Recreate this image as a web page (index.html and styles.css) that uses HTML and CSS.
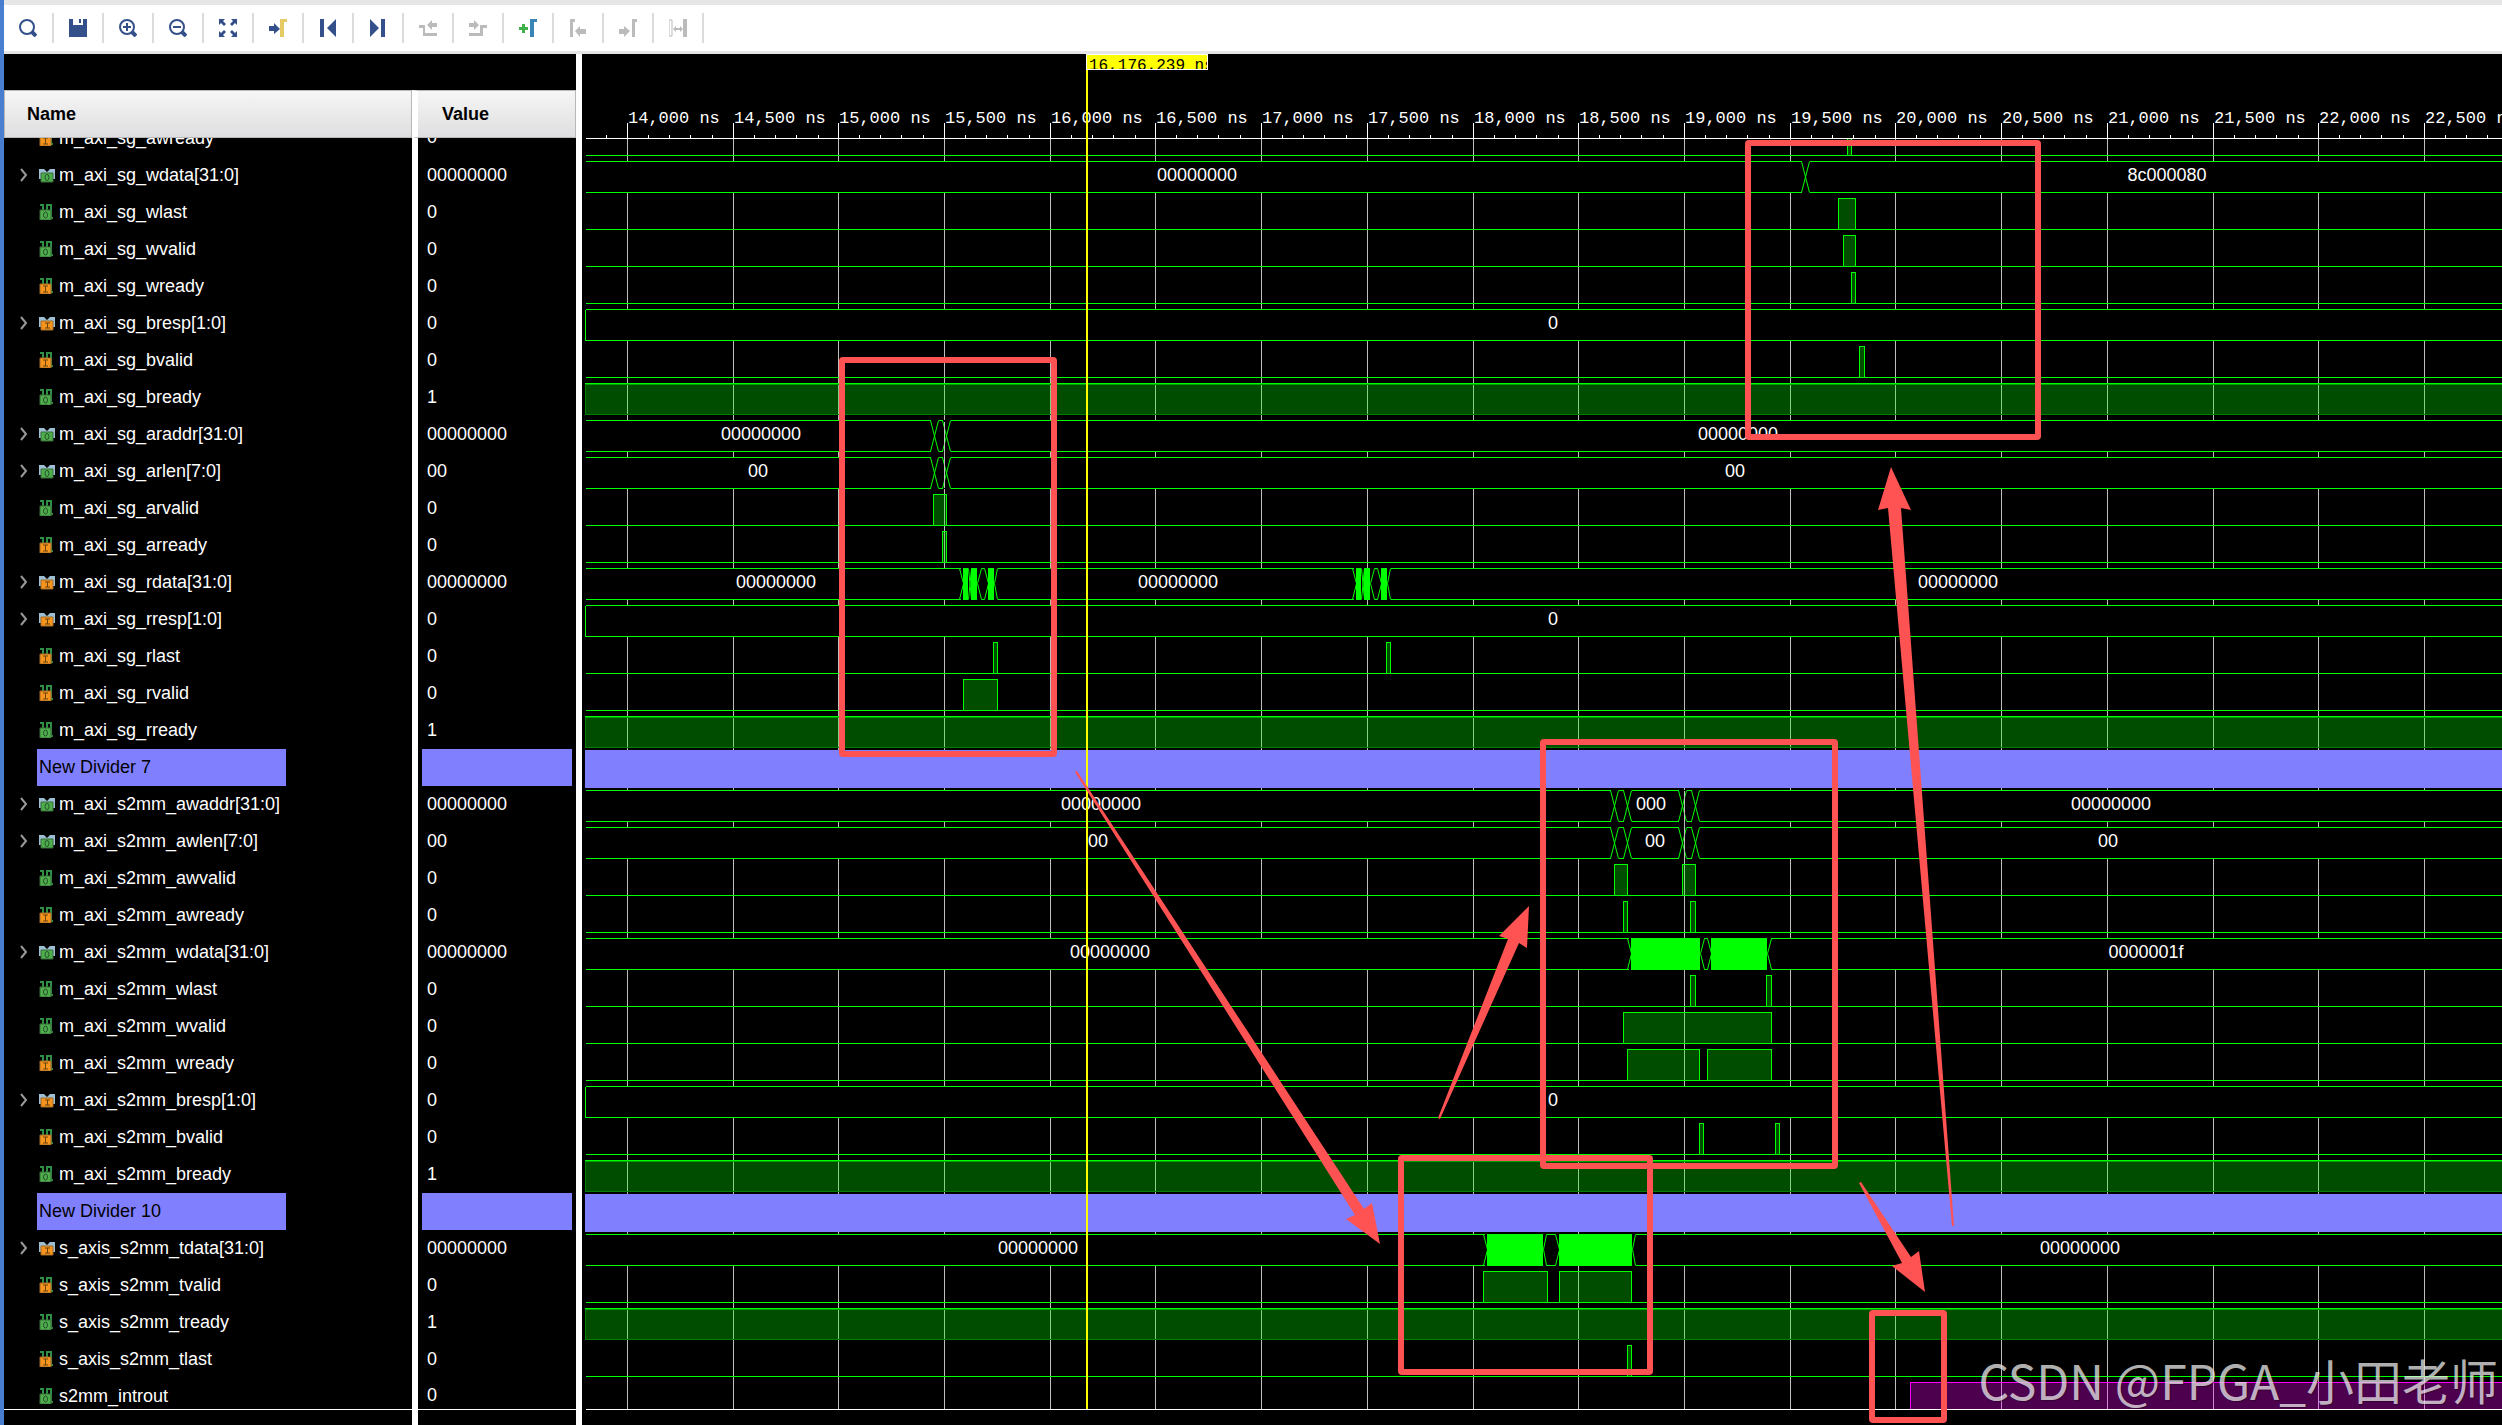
FILE: index.html
```html
<!DOCTYPE html>
<html lang="en">
<head>
<meta charset="utf-8">
<title>Waveform</title>
<link rel="stylesheet" href="styles.css">
</head>
<body>
<svg class="defs" aria-hidden="true">
  <symbol id="net-out" viewBox="0 0 16 16"><path d="M1 1h3v6M8 7V1h4v13h2" fill="none" stroke="#2f8f45" stroke-width="2"/><path d="M1 6h11v10H1z" fill="#4fae4c" stroke="#3a6b3a"/><ellipse cx="6.500" cy="11" rx="2" ry="3" fill="none" stroke="#24502a"/></symbol>
  <symbol id="net-in" viewBox="0 0 16 16"><path d="M1 1h3v6M8 7V1h4v13h2" fill="none" stroke="#2f8f45" stroke-width="2"/><path d="M1 6h11v10H1z" fill="#f7941d" stroke="#a06a2a"/><path d="M4 8h5M4 14h5M6.500 8v6" stroke="#6b430f"/></symbol>
  <symbol id="bus-out" viewBox="0 0 16 16"><path d="M0 2h5l3 3 3-3h5v10h-3V8H3v4H0z" fill="#9dbfd3"/><path d="M2 6h12v9H2z" fill="#4fae4c" stroke="#3a6b3a"/><ellipse cx="8" cy="10.500" rx="2" ry="3" fill="none" stroke="#24502a"/></symbol>
  <symbol id="bus-in" viewBox="0 0 16 16"><path d="M0 2h5l3 3 3-3h5v10h-3V8H3v4H0z" fill="#9dbfd3"/><path d="M2 6h12v9H2z" fill="#f7941d" stroke="#a06a2a"/><path d="M6 8h5M6 13h5M8.500 8v5" stroke="#6b430f"/></symbol>
  <symbol id="chev" viewBox="0 0 16 16"><path d="M5 2l5 6-5 6" fill="none" stroke="#999" stroke-width="2"/></symbol>
</svg>

<header class="toolbar">
  <button aria-label="Find"><svg viewBox="0 0 18 18"><circle cx="8" cy="8" r="7" class="ln"/><path d="M13 13l4 4" class="ln thick"/></svg></button>
  <button aria-label="Save"><svg viewBox="0 0 18 18"><path d="M0 0h4v6h10V0h4v18H0z M10 0h2v4h-2z"/></svg></button>
  <button aria-label="Zoom in"><svg viewBox="0 0 18 18"><circle cx="8" cy="8" r="7" class="ln"/><path d="M13 13l4 4" class="ln thick"/><path d="M4 8h8M8 4v8" class="ln"/></svg></button>
  <button aria-label="Zoom out"><svg viewBox="0 0 18 18"><circle cx="8" cy="8" r="7" class="ln"/><path d="M13 13l4 4" class="ln thick"/><path d="M4 8h8" class="ln"/></svg></button>
  <button aria-label="Zoom fit"><svg viewBox="0 0 18 18"><path d="M0 0h6L4 2l3 3-2 2-3-3-2 2zM18 0v6l-2-2-3 3-2-2 3-3-2-2zM0 18v-6l2 2 3-3 2 2-3 3 2 2zM18 18h-6l2-2-3-3 2-2 3 3 2-2z"/></svg></button>
  <button aria-label="Go to cursor"><svg viewBox="0 0 18 18"><path d="M0 7h5V4l6 6-6 5v-3H0z"/><path d="M11 0h7v3h-3v15h-4z" fill="#e3ca62"/></svg></button>
  <button aria-label="Go to start"><svg viewBox="0 0 18 18"><path d="M1 0h4v18H1zM17 0v18L8 9z"/></svg></button>
  <button aria-label="Go to end"><svg viewBox="0 0 18 18"><path d="M12 0h4v18h-4zM1 0v18l9-9z"/></svg></button>
  <button aria-label="Previous transition" disabled><svg viewBox="0 0 18 18"><path d="M0 6h6v8h12v3H4V9H0zM8 6l5-5v3h5v4h-5v3z"/></svg></button>
  <button aria-label="Next transition" disabled><svg viewBox="0 0 18 18"><path d="M0 14h11V6h7v3h-4v8H0zM0 4h5V1l5 5-5 5V8H0z"/></svg></button>
  <button aria-label="Add marker"><svg viewBox="0 0 18 18"><path d="M3 5h3v3h3v3H6v3H3v-3H0V8h3z" fill="#3fb04a"/><path d="M11 0h7v3h-3v15h-4z" fill="#3a85b5"/></svg></button>
  <button aria-label="Previous marker" disabled><svg viewBox="0 0 18 18"><path d="M1 0h5v3H4v15H1zM6 12l5-5v3h6v5h-6v3z"/></svg></button>
  <button aria-label="Next marker" disabled><svg viewBox="0 0 18 18"><path d="M13 0h5v3h-2v15h-3zM0 10h5V7l6 5-6 6v-3H0z"/></svg></button>
  <button aria-label="Swap cursors" disabled><svg viewBox="0 0 18 18"><path d="M0 1h3v16H0z" fill="none" stroke="#bbb"/><path d="M14 0h4v18h-4zM4 10l3-3v2h4V7l3 3-3 3v-2H7v2z"/></svg></button>
</header>

<main class="viewer">
  <section class="signals">
    <table>
      <thead><tr><th scope="col" class="c-name">Name</th><th scope="col">Value</th></tr></thead>
      <tbody>
        <tr class="cut-top"><td><div class="sig"><i></i><svg><use href="#net-in"/></svg>m_axi_sg_awready</div></td><td><div class="val">0</div></td></tr>
        <tr><td><div class="sig"><button aria-label="Expand"><svg><use href="#chev"/></svg></button><svg><use href="#bus-out"/></svg>m_axi_sg_wdata[31:0]</div></td><td>00000000</td></tr>
        <tr><td><div class="sig"><i></i><svg><use href="#net-out"/></svg>m_axi_sg_wlast</div></td><td>0</td></tr>
        <tr><td><div class="sig"><i></i><svg><use href="#net-out"/></svg>m_axi_sg_wvalid</div></td><td>0</td></tr>
        <tr><td><div class="sig"><i></i><svg><use href="#net-in"/></svg>m_axi_sg_wready</div></td><td>0</td></tr>
        <tr><td><div class="sig"><button aria-label="Expand"><svg><use href="#chev"/></svg></button><svg><use href="#bus-in"/></svg>m_axi_sg_bresp[1:0]</div></td><td>0</td></tr>
        <tr><td><div class="sig"><i></i><svg><use href="#net-in"/></svg>m_axi_sg_bvalid</div></td><td>0</td></tr>
        <tr><td><div class="sig"><i></i><svg><use href="#net-out"/></svg>m_axi_sg_bready</div></td><td>1</td></tr>
        <tr><td><div class="sig"><button aria-label="Expand"><svg><use href="#chev"/></svg></button><svg><use href="#bus-out"/></svg>m_axi_sg_araddr[31:0]</div></td><td>00000000</td></tr>
        <tr><td><div class="sig"><button aria-label="Expand"><svg><use href="#chev"/></svg></button><svg><use href="#bus-out"/></svg>m_axi_sg_arlen[7:0]</div></td><td>00</td></tr>
        <tr><td><div class="sig"><i></i><svg><use href="#net-out"/></svg>m_axi_sg_arvalid</div></td><td>0</td></tr>
        <tr><td><div class="sig"><i></i><svg><use href="#net-in"/></svg>m_axi_sg_arready</div></td><td>0</td></tr>
        <tr><td><div class="sig"><button aria-label="Expand"><svg><use href="#chev"/></svg></button><svg><use href="#bus-in"/></svg>m_axi_sg_rdata[31:0]</div></td><td>00000000</td></tr>
        <tr><td><div class="sig"><button aria-label="Expand"><svg><use href="#chev"/></svg></button><svg><use href="#bus-in"/></svg>m_axi_sg_rresp[1:0]</div></td><td>0</td></tr>
        <tr><td><div class="sig"><i></i><svg><use href="#net-in"/></svg>m_axi_sg_rlast</div></td><td>0</td></tr>
        <tr><td><div class="sig"><i></i><svg><use href="#net-in"/></svg>m_axi_sg_rvalid</div></td><td>0</td></tr>
        <tr><td><div class="sig"><i></i><svg><use href="#net-out"/></svg>m_axi_sg_rready</div></td><td>1</td></tr>
        <tr class="divider"><td><div>New Divider 7</div></td><td><div></div></td></tr>
        <tr><td><div class="sig"><button aria-label="Expand"><svg><use href="#chev"/></svg></button><svg><use href="#bus-out"/></svg>m_axi_s2mm_awaddr[31:0]</div></td><td>00000000</td></tr>
        <tr><td><div class="sig"><button aria-label="Expand"><svg><use href="#chev"/></svg></button><svg><use href="#bus-out"/></svg>m_axi_s2mm_awlen[7:0]</div></td><td>00</td></tr>
        <tr><td><div class="sig"><i></i><svg><use href="#net-out"/></svg>m_axi_s2mm_awvalid</div></td><td>0</td></tr>
        <tr><td><div class="sig"><i></i><svg><use href="#net-in"/></svg>m_axi_s2mm_awready</div></td><td>0</td></tr>
        <tr><td><div class="sig"><button aria-label="Expand"><svg><use href="#chev"/></svg></button><svg><use href="#bus-out"/></svg>m_axi_s2mm_wdata[31:0]</div></td><td>00000000</td></tr>
        <tr><td><div class="sig"><i></i><svg><use href="#net-out"/></svg>m_axi_s2mm_wlast</div></td><td>0</td></tr>
        <tr><td><div class="sig"><i></i><svg><use href="#net-out"/></svg>m_axi_s2mm_wvalid</div></td><td>0</td></tr>
        <tr><td><div class="sig"><i></i><svg><use href="#net-in"/></svg>m_axi_s2mm_wready</div></td><td>0</td></tr>
        <tr><td><div class="sig"><button aria-label="Expand"><svg><use href="#chev"/></svg></button><svg><use href="#bus-in"/></svg>m_axi_s2mm_bresp[1:0]</div></td><td>0</td></tr>
        <tr><td><div class="sig"><i></i><svg><use href="#net-in"/></svg>m_axi_s2mm_bvalid</div></td><td>0</td></tr>
        <tr><td><div class="sig"><i></i><svg><use href="#net-out"/></svg>m_axi_s2mm_bready</div></td><td>1</td></tr>
        <tr class="divider"><td><div>New Divider 10</div></td><td><div></div></td></tr>
        <tr><td><div class="sig"><button aria-label="Expand"><svg><use href="#chev"/></svg></button><svg><use href="#bus-in"/></svg>s_axis_s2mm_tdata[31:0]</div></td><td>00000000</td></tr>
        <tr><td><div class="sig"><i></i><svg><use href="#net-in"/></svg>s_axis_s2mm_tvalid</div></td><td>0</td></tr>
        <tr><td><div class="sig"><i></i><svg><use href="#net-out"/></svg>s_axis_s2mm_tready</div></td><td>1</td></tr>
        <tr><td><div class="sig"><i></i><svg><use href="#net-in"/></svg>s_axis_s2mm_tlast</div></td><td>0</td></tr>
        <tr class="cut-bottom"><td><div class="sig"><i></i><svg><use href="#net-out"/></svg>s2mm_introut</div></td><td><div class="val">0</div></td></tr>
      </tbody>
    </table>
  </section>

  <section class="waves">
    <div class="cursor"><span>16,176.239 ns</span></div>
    <svg class="ruler">
      <defs><g id="major"><path d="M0 68v16M21 80v4M42 80v4M63 80v4M85 80v4"/></g></defs>
      <g class="crisp" transform="translate(.5 .5)" stroke="#fff">
        <path d="M3 84H4000M24 80v4"/>
        <use href="#major" x="45"/><use href="#major" x="151"/><use href="#major" x="256"/><use href="#major" x="362"/><use href="#major" x="468"/><use href="#major" x="573"/><use href="#major" x="679"/><use href="#major" x="785"/><use href="#major" x="891"/><use href="#major" x="996"/><use href="#major" x="1102"/><use href="#major" x="1208"/><use href="#major" x="1313"/><use href="#major" x="1419"/><use href="#major" x="1525"/><use href="#major" x="1631"/><use href="#major" x="1736"/><use href="#major" x="1842"/>
      </g>
      <g class="ticks">
        <text x="46" y="69">14,000 ns</text><text x="152" y="69">14,500 ns</text><text x="257" y="69">15,000 ns</text><text x="363" y="69">15,500 ns</text><text x="469" y="69">16,000 ns</text><text x="574" y="69">16,500 ns</text><text x="680" y="69">17,000 ns</text><text x="786" y="69">17,500 ns</text><text x="892" y="69">18,000 ns</text><text x="997" y="69">18,500 ns</text><text x="1103" y="69">19,000 ns</text><text x="1209" y="69">19,500 ns</text><text x="1314" y="69">20,000 ns</text><text x="1420" y="69">20,500 ns</text><text x="1526" y="69">21,000 ns</text><text x="1632" y="69">21,500 ns</text><text x="1737" y="69">22,000 ns</text><text x="1843" y="69">22,500 ns</text>
      </g>
    </svg>
    <svg class="plot">
      <defs>
        <path id="low" d="M585 35H4000"/>
        <g id="bus"><path d="M585 4h4000v31h-4000z" fill="#000" stroke="none"/><path d="M585 4H4000M585 35H4000"/></g>
        <g id="high"><path d="M585 4h4000v31h-4000z" class="fill"/><path d="M585 5H4000" stroke="#00a000"/><path d="M585 35H4000M585 4V35" stroke="#008000"/><path d="M585 4H4000"/></g>
        <path id="band" d="M585 1h4000v37h-4000z" fill="#8080ff" stroke="#8080ff"/>
        <g id="cross"><path d="M0 4H8M0 35H8" stroke="#000"/><path d="M0 4L8 35M8 4L0 35" class="soft"/></g>
        <!-- single-cycle pulse -->
        <path id="p4" d="M0 35V4H4V35" class="fill"/>
      </defs>
      <g class="crisp" transform="translate(-581.5 18.5)" stroke="#00ff00" fill="none">
        <path class="grid" d="M627-19V1252M733-19V1252M838-19V1252M944-19V1252M1050-19V1252M1155-19V1252M1261-19V1252M1367-19V1252M1473-19V1252M1578-19V1252M1684-19V1252M1790-19V1252M1895-19V1252M2001-19V1252M2107-19V1252M2213-19V1252M2318-19V1252M2424-19V1252"/>

        <use href="#low" y="-37"/><path class="fill" d="M1847-2V-40H1851V-2"/>
        <use href="#bus"/><use href="#cross" x="1801"/>
        <use href="#low" y="37"/><path class="fill" d="M1838 72V41H1855V72"/>
        <use href="#low" y="74"/><path class="fill" d="M1843 109V78H1855V109"/>
        <use href="#low" y="111"/><use href="#p4" x="1851" y="111"/>
        <use href="#bus" y="148"/><path d="M585 152V183"/>
        <use href="#low" y="185"/><path class="fill" d="M1859 220V189H1864V220"/>
        <use href="#high" y="222"/>
        <use href="#bus" y="259"/><use href="#cross" x="930" y="259"/><use href="#cross" x="942" y="259"/>
        <use href="#bus" y="296"/><use href="#cross" x="930" y="296"/><use href="#cross" x="942" y="296"/>
        <use href="#low" y="333"/><path class="fill" d="M933 368V337H946V368"/>
        <use href="#low" y="370"/><use href="#p4" x="942" y="370"/>
        <use href="#bus" y="407"/>
        <g id="rburst" transform="translate(0 407)">
          <path d="M960 4H997M960 35H997" stroke="#000"/>
          <path class="soft" d="M959 4L963 19 959 35M977 19L981 4H984L988 19 984 35H981L977 19M997 4L994 19 997 35M968 4l3 31M968 35l3-31"/>
          <path class="solid" d="M963 4h4v31h-4zM971 4h5v31h-5zM988 4h5v31h-5z"/>
        </g>
        <use href="#rburst" x="393"/>
        <use href="#bus" y="444"/><path d="M585 448V479"/>
        <use href="#low" y="481"/><use href="#p4" x="993" y="481"/><use href="#p4" x="1386" y="481"/>
        <use href="#low" y="518"/><path class="fill" d="M963 553V522H997V553"/>
        <use href="#high" y="555"/>
        <use href="#band" y="592"/>
        <use href="#bus" y="629"/><use href="#cross" x="1610" y="629"/><use href="#cross" x="1623" y="629"/><use href="#cross" x="1678" y="629"/><use href="#cross" x="1691" y="629"/>
        <use href="#bus" y="666"/><use href="#cross" x="1610" y="666"/><use href="#cross" x="1623" y="666"/><use href="#cross" x="1678" y="666"/><use href="#cross" x="1691" y="666"/>
        <path class="grid" d="M944 264V330M1684 633V701"/>
        <use href="#low" y="703"/><path class="fill" d="M1614 738V707H1627V738M1682 738V707H1695V738"/>
        <use href="#low" y="740"/><use href="#p4" x="1623" y="740"/><path class="fill" d="M1690 775V744H1695V775"/>
        <use href="#bus" y="777"/>
        <g transform="translate(0 777)">
          <path d="M1628 4H1770M1628 35H1770" stroke="#000"/>
          <path class="soft" d="M1627 4L1631 19 1627 35M1700 19L1704 4H1707L1711 19 1707 35H1704L1700 19M1771 4L1767 19 1771 35"/>
          <path class="solid" d="M1631 4h68v31h-68zM1711 4h55v31h-55z"/>
        </g>
        <use href="#low" y="814"/><path class="fill" d="M1690 849V818H1695V849M1766 849V818H1771V849"/>
        <use href="#low" y="851"/><path class="fill" d="M1623 886V855H1771V886"/>
        <use href="#low" y="888"/><path class="fill" d="M1627 923V892H1699V923M1707 923V892H1771V923"/>
        <use href="#bus" y="925"/><path d="M585 929V960"/>
        <use href="#low" y="962"/><use href="#p4" x="1699" y="962"/><use href="#p4" x="1775" y="962"/>
        <use href="#high" y="999"/>
        <use href="#band" y="1036"/>
        <use href="#bus" y="1073"/>
        <g transform="translate(0 1073)">
          <path d="M1484 4H1635M1484 35H1635" stroke="#000"/>
          <path class="soft" d="M1483 4L1487 19 1483 35M1543 19L1546 4H1555L1559 19 1555 35H1546L1543 19M1635 4L1632 19 1635 35"/>
          <path class="solid" d="M1487 4h55v31h-55zM1559 4h72v31h-72z"/>
        </g>
        <use href="#low" y="1110"/><path class="fill" d="M1483 1145V1114H1547V1145M1559 1145V1114H1631V1145"/>
        <use href="#high" y="1147"/>
        <use href="#low" y="1184"/><use href="#p4" x="1627" y="1184"/>
        <path class="intr" d="M1910 1253V1225H4000V1253"/>
        <path d="M585 1252H4000" stroke="#fff"/>
      </g>
      <g class="vals">
        <text x="615" y="42">00000000</text><text x="1585" y="42">8c000080</text>
        <text x="971" y="190">0</text>
        <text x="179" y="301">00000000</text><text x="1156" y="301">00000000</text>
        <text x="176" y="338">00</text><text x="1153" y="338">00</text>
        <text x="194" y="449">00000000</text><text x="596" y="449">00000000</text><text x="1376" y="449">00000000</text>
        <text x="971" y="486">0</text>
        <text x="519" y="671">00000000</text><text x="1069" y="671">000</text><text x="1529" y="671">00000000</text>
        <text x="516" y="708">00</text><text x="1073" y="708">00</text><text x="1526" y="708">00</text>
        <text x="528" y="819">00000000</text><text x="1564" y="819">0000001f</text>
        <text x="971" y="967">0</text>
        <text x="456" y="1115">00000000</text><text x="1498" y="1115">00000000</text>
      </g>
    </svg>
    <svg class="notes" aria-hidden="true">
      <g transform="translate(-582 -54)">
        <g class="boxes">
          <rect x="1748" y="143" width="290" height="294" rx="1"/>
          <rect x="842" y="360" width="212" height="394" rx="1"/>
          <rect x="1543" y="742" width="292" height="424" rx="1"/>
          <rect x="1401" y="1158" width="249" height="214" rx="1"/>
          <rect x="1872" y="1313" width="72" height="107" rx="1"/>
        </g>
        <path d="M1075 772L1355 1215 1346 1219 1380 1244 1372 1203 1364 1209 1077 771z"/>
        <path d="M1438 1118L1508 939 1499 936 1529 906 1527 948 1519 943 1440 1119z"/>
        <path d="M1859 1183L1902 1263 1892 1266 1925 1292 1919 1251 1911 1257 1861 1182z"/>
        <path d="M1954 1226L1901 508 1911 510 1891 467 1878 510 1888 508 1952 1226z"/>
      </g>
    </svg>
    <div class="mark">CSDN @FPGA_小田老师</div>
  </section>
</main>
</body>
</html>
```
FILE: styles.css
```css
* { box-sizing: border-box; }
body {
  margin: 0;
  min-height: 100vh;
  display: flex;
  flex-direction: column;
  border-left: 4px solid #4a7fcf;
  background: #fff;
  color: #fff;
  font: 18px/36px "Liberation Sans", Arial, sans-serif;
  overflow-x: hidden;
}
.defs { position: absolute; width: 0; height: 0; }
button { border: 0; margin: 0; padding: 0; background: none; }

.toolbar {
  display: flex;
  align-items: center;
  height: 54px;
  border-top: 5px solid #e6e6e6;
  border-bottom: 3px solid #e6e6e6;
}
.toolbar button {
  width: 50px;
  height: 30px;
  display: flex;
  align-items: center;
  justify-content: center;
  border-right: 2px solid #dcdcdc;
}
.toolbar svg { width: 18px; height: 18px; fill: #33508a; }
.toolbar button:disabled svg { fill: #bbb; }
.toolbar .ln { fill: none; stroke: #33508a; stroke-width: 2; }
.toolbar .thick { stroke-width: 4; }

.viewer { flex: 1; display: flex; }
.signals {
  flex: none;
  width: 572px;
  padding-top: 36px;
  background: linear-gradient(to right, #000 408px, #fff 408px 414px, #000 414px);
  background-position: 0 36px;
  background-repeat: no-repeat;
  background-color: #000;
}
table { width: 100%; border-collapse: separate; border-spacing: 0; table-layout: fixed; }
th {
  height: 48px;
  padding: 0 0 0 22px;
  border: 1px solid #b8b8b8;
  background: linear-gradient(#f6f6f6, #dedee0);
  background-clip: padding-box;
  color: #000;
  text-align: left;
  line-height: 20px;
}
th + th { padding-left: 24px; }
.c-name { width: 408px; }
th + th, td + td { border-left: 6px solid #fff; }
td { height: 37px; padding: 0; white-space: nowrap; }
td + td { padding: 0 0 1px 9px; line-height: 34px; }
.sig { display: flex; align-items: center; height: 37px; padding: 0 0 2px 12px; }
.sig button, .sig i { width: 16px; height: 16px; margin-right: 7px; }
.sig svg { display: block; width: 16px; height: 16px; }
.sig > svg { margin-right: 4px; }
.val { height: 37px; line-height: 35px; }
.cut-top td { height: 19px; padding-bottom: 0; }
.cut-top .sig, .cut-top .val { margin-top: -18px; clip-path: inset(18px 0 0 0); }
.cut-bottom td { height: 32px; padding-bottom: 0; border-bottom: 1px solid #fff; }
.cut-bottom .sig, .cut-bottom .val { height: 37px; margin-bottom: -6px; }
.divider div { height: 37px; background: #8080ff; color: #000; }
.divider td:first-child div { width: 249px; margin-left: 33px; padding-left: 2px; }
.divider td + td { padding: 0 4px; }

.waves {
  position: relative;
  flex: 1;
  min-width: 0;
  display: flex;
  flex-direction: column;
  margin-left: 6px;
  background: #000;
  overflow: hidden;
}
.ruler { display: block; width: 100%; height: 85px; }
.plot { display: block; width: 100%; height: 1271px; }
.crisp { shape-rendering: crispEdges; }
.ticks text { font: 17px "Liberation Mono", monospace; fill: #fff; }
.vals text { font: 18px "Liberation Sans", Arial, sans-serif; fill: #fff; text-anchor: middle; }
.grid { stroke: #bebebe; }
.fill { fill: rgba(0, 255, 0, .3); }
.solid { fill: #00ff00; }
.soft { shape-rendering: auto; }
.intr { stroke: #ff00ff; fill: rgba(255, 0, 255, .3); }
.cursor {
  position: absolute;
  top: 0;
  left: 504px;
  height: 1355px;
  border-left: 2px solid #ffff00;
}
.cursor span {
  position: absolute;
  top: 0;
  left: -2px;
  width: 122px;
  height: 16px;
  padding-left: 2px;
  border: 1px solid #fff;
  background: #ffff00;
  color: #000;
  font: 16px/22px "Liberation Mono", monospace;
  white-space: nowrap;
  overflow: hidden;
}
.notes { position: absolute; inset: 0; width: 100%; height: 100%; fill: #ff5252; }
.boxes { fill: none; stroke: #ff5252; stroke-width: 6; }
.mark {
  position: absolute;
  right: 4px;
  bottom: 10px;
  color: rgba(255, 255, 255, .7);
  font: 48px/72px "Noto Sans CJK SC", sans-serif;
  text-shadow: 1px 1px 1px rgba(0, 0, 0, .3);
  white-space: nowrap;
}
```
